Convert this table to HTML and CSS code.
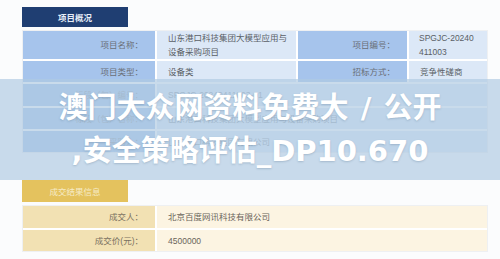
FILE: index.html
```html
<!DOCTYPE html>
<html lang="zh">
<head>
<meta charset="utf-8">
<link rel="stylesheet" href="styles.css">
</head>
<body>
<div class="page">
  <section class="sec">
    <div class="tab tab-blue">项目概况</div>
    <div class="grid grid-4 blue">
      <div class="lab row-tall">项目名称：</div>
      <div class="val row-tall wide">山东港口科技集团大模型应用与设备采购项目</div>
      <div class="lab row-tall">项目编号：</div>
      <div class="val row-tall code">SPGJC-20240411003</div>

      <div class="lab r21">项目类型：</div>
      <div class="val r21">设备类</div>
      <div class="lab r21">招标方式：</div>
      <div class="val r21">竞争性磋商</div>

      <div class="lab r22 hid">标段（包）编号：</div>
      <div class="val r22 span3 hid">SPGJC-20240411003-01</div>

      <div class="lab r21 hid">标段（包）名称：</div>
      <div class="val r21 span3 hid">山东港口科技集团大模型应用与设备采购项目</div>

      <div class="lab r21 hid">采购人：</div>
      <div class="val r21 span3 hid">山东港口科技集团有限公司</div>
    </div>
  </section>

  <section class="sec sec2">
    <div class="tab tab-gold">成交结果信息</div>
    <div class="grid grid-2 gold">
      <div class="lab r22">成交人：</div>
      <div class="val r22">北京百度网讯科技有限公司</div>
      <div class="lab r21">成交价(元)：</div>
      <div class="val r21">4500000</div>
    </div>
  </section>

  <div class="overlay">
    <h1 class="title">澳门大众网资料免费大 / 公开<br>,安全策略评估_DP10.670</h1>
  </div>
</div>
</body>
</html>
```

FILE: styles.css
```css
* { box-sizing: border-box; }
html, body { margin: 0; padding: 0; }
body {
  background: #fbfcfd;
  font-family: "Liberation Sans", "Noto Sans CJK SC", sans-serif;
  width: 500px;
  height: 259px;
  overflow: hidden;
}
.page {
  position: relative;
  width: 500px;
  height: 259px;
  padding: 7px 13px 0 22px;
}
.sec2 { margin-top: 28px; }
.tab {
  width: 106px;
  height: 20px;
  display: flex;
  align-items: center;
  justify-content: center;
  font-size: 8.5px;
  font-family: "Noto Sans CJK SC", sans-serif;
}
.tab-blue { background: #1f3e72; color: #e6edf7; font-weight: 700; }
.tab-gold { background: #e4c25e; color: #f6ebc6; height: 22px; }
.grid {
  display: grid;
  gap: 2px;
  margin: 4px 0 0 1px;
  width: 464px;
  background: #fff;
  outline: 1px solid #eef0f2;
  font-size: 8.5px;
  line-height: 14px;
  font-family: "Liberation Sans", "Noto Sans CJK SC", sans-serif;
}
.grid-4 { grid-template-columns: 132px 139px 109px 78px; }
.grid-2 { grid-template-columns: 132px 330px; }
.lab {
  display: flex;
  align-items: center;
  justify-content: flex-end;
  padding-right: 12px;
  color: #6a6f78;
}
.val {
  display: flex;
  align-items: center;
  padding: 0 11px 0 11px;
  color: #5a5f66;
}
.val.wide { padding-right: 6px; }
.val.code { word-break: break-all; padding: 0 11px 0 10px; }
.span3 { grid-column: span 3; }
.row-tall { height: 28px; }
.r21 { height: 21px; }
.r22 { height: 22px; }
.blue .lab { background: #a6c4ec; }
.blue .val { background: #dce8f7; }
.blue .hid { color: #8e98a6; }
.gold .lab { background: #f2e1b3; color: #7a7060; }
.gold .val { background: #fcf4e2; color: #6a645a; }
.overlay {
  position: absolute;
  left: 0;
  top: 79px;
  width: 500px;
  height: 101px;
  background: rgba(176, 202, 225, 0.68);
  display: flex;
  align-items: center;
  justify-content: center;
}
.title {
  margin: 0;
  text-align: center;
  color: #ffffff;
  font-family: "DejaVu Sans", "Noto Sans CJK SC", sans-serif;
  font-weight: 700;
  font-size: 29px;
  line-height: 43px;
  word-spacing: 2px;
  text-shadow: 0 1px 2px rgba(60, 90, 120, 0.25);
}
```
